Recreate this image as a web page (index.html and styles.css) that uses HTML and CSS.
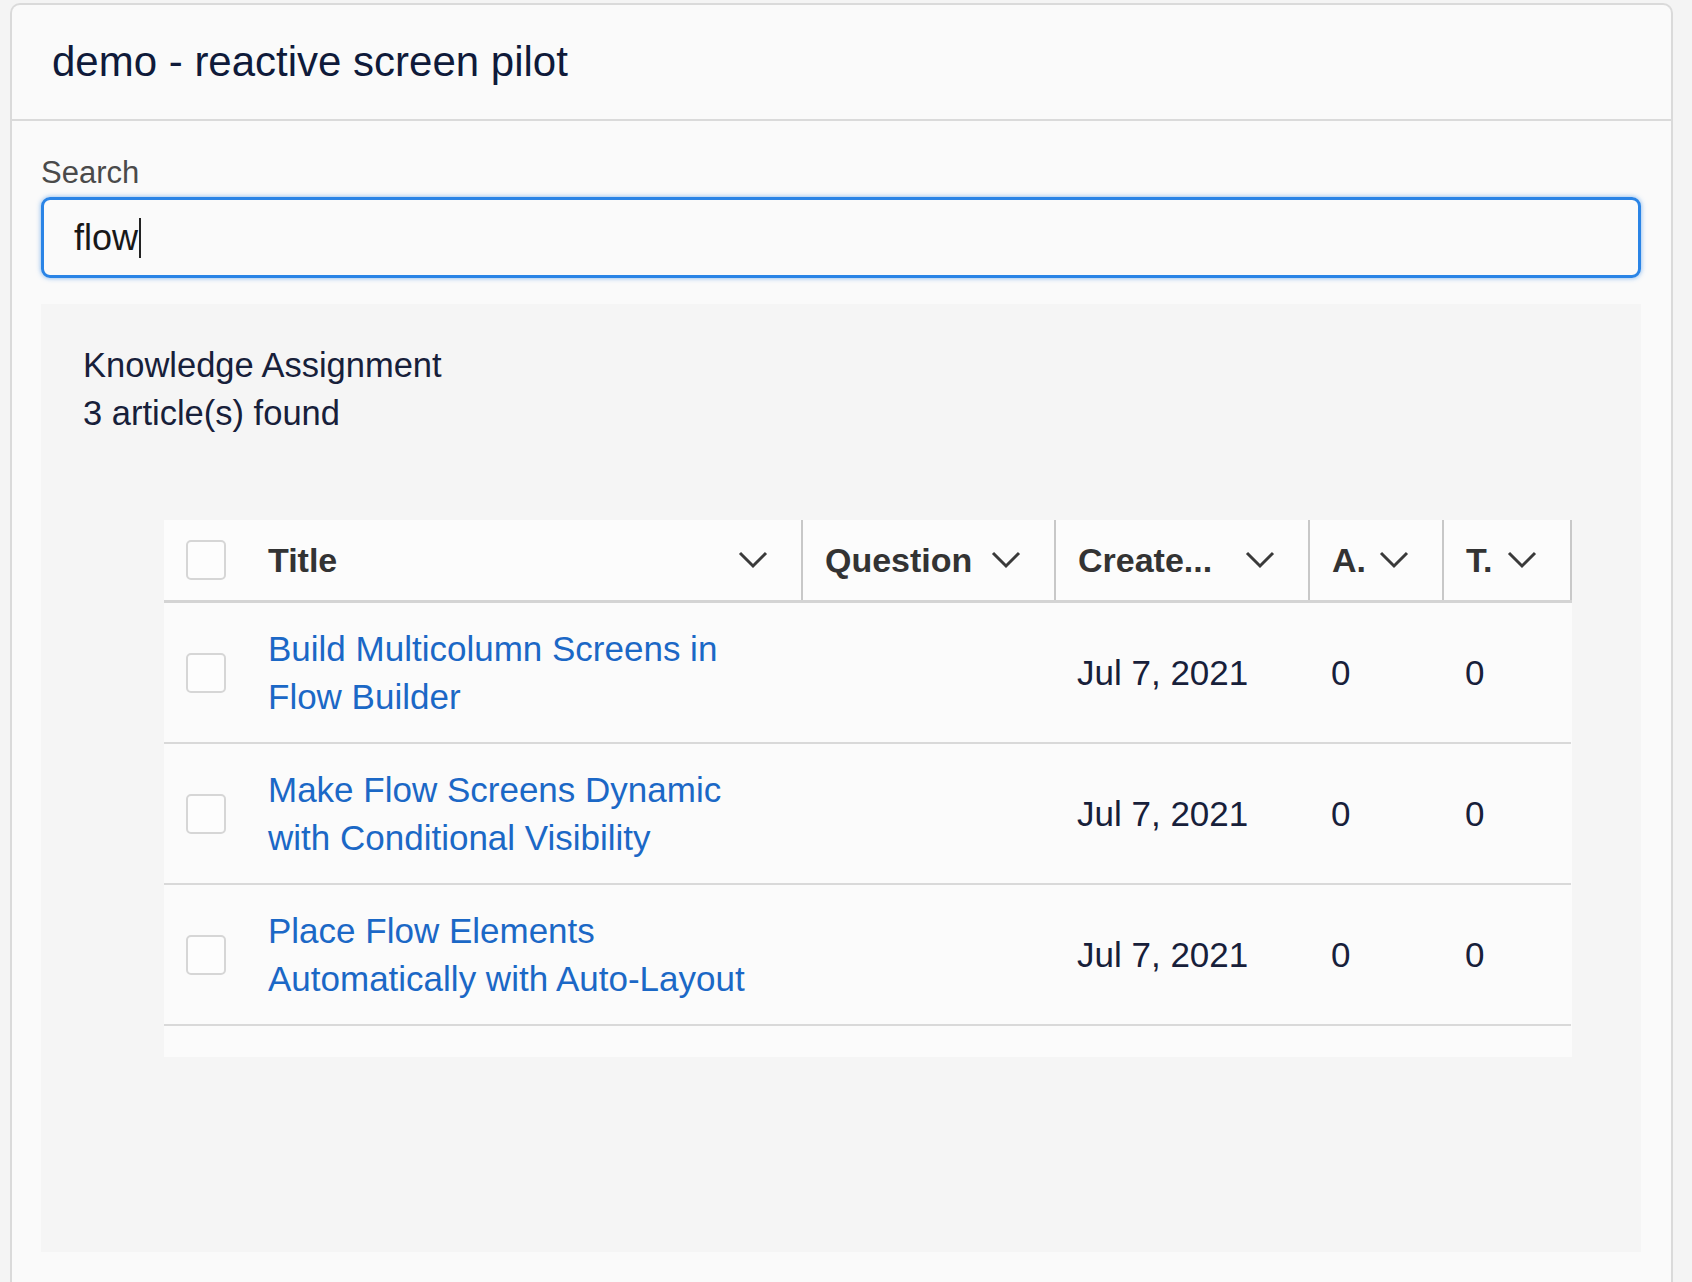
FILE: index.html
```html
<!DOCTYPE html>
<html lang="en">
<head>
    <meta charset="UTF-8">
    <title>demo - reactive screen pilot</title>
    <link rel="stylesheet" href="styles.css">
</head>
<body>

    <div class="card">
        <div class="card-header">
            <h1>demo - reactive screen pilot</h1>
        </div>

        <div class="card-body">
            <label class="field-label" for="search">Search</label>
            <div class="search-input" id="search" role="textbox">flow<span class="caret"></span></div>

            <!-- Resultados -->
            <div class="results">
                <p class="results-title">Knowledge Assignment</p>
                <p class="results-count">3 article(s) found</p>

                <div class="table-wrap">
                    <table class="datatable">
                        <colgroup>
                            <col class="col-check">
                            <col class="col-title">
                            <col class="col-question">
                            <col class="col-created">
                            <col class="col-a">
                            <col class="col-t">
                        </colgroup>
                        <thead>
                            <tr>
                                <th class="check-cell"><span class="checkbox"></span></th>
                                <th><div class="th-inner"><span>Title</span><svg class="chevron" viewBox="0 0 30 18"><path d="M2 2 L15 15 L28 2"/></svg></div></th>
                                <th><div class="th-inner"><span>Question</span><svg class="chevron" viewBox="0 0 30 18"><path d="M2 2 L15 15 L28 2"/></svg></div></th>
                                <th><div class="th-inner"><span>Create...</span><svg class="chevron" viewBox="0 0 30 18"><path d="M2 2 L15 15 L28 2"/></svg></div></th>
                                <th><div class="th-inner"><span>A.</span><svg class="chevron" viewBox="0 0 30 18"><path d="M2 2 L15 15 L28 2"/></svg></div></th>
                                <th><div class="th-inner"><span>T.</span><svg class="chevron" viewBox="0 0 30 18"><path d="M2 2 L15 15 L28 2"/></svg></div></th>
                            </tr>
                        </thead>
                        <tbody>
                            <tr>
                                <td class="check-cell"><span class="checkbox"></span></td>
                                <td><a href="#">Build Multicolumn Screens in Flow Builder</a></td>
                                <td></td>
                                <td>Jul 7, 2021</td>
                                <td>0</td>
                                <td>0</td>
                            </tr>
                            <tr>
                                <td class="check-cell"><span class="checkbox"></span></td>
                                <td><a href="#">Make Flow Screens Dynamic with Conditional Visibility</a></td>
                                <td></td>
                                <td>Jul 7, 2021</td>
                                <td>0</td>
                                <td>0</td>
                            </tr>
                            <tr>
                                <td class="check-cell"><span class="checkbox"></span></td>
                                <td><a href="#">Place Flow Elements Automatically with Auto-Layout</a></td>
                                <td></td>
                                <td>Jul 7, 2021</td>
                                <td>0</td>
                                <td>0</td>
                            </tr>
                        </tbody>
                    </table>
                </div>
            </div>
        </div>
    </div>

</body>
</html>
```

FILE: styles.css
```css
:root {
    --page-bg: #f4f4f4;
    --card-bg: #fafafa;
    --card-border: #dadada;
    --text-color: #17203a;
    --label-color: #4a4a4a;
    --header-color: #333333;
    --link-color: #1b68c6;
    --input-border: #2a84e6;
    --line-color: #d9d9d9;
}

body {
    margin: 0;
    background-color: var(--page-bg);
    font-family: "Liberation Sans", Arial, sans-serif;
    color: var(--text-color);
}

.card {
    margin: 3px 19px 0 10px;
    min-height: 1300px;
    background-color: var(--card-bg);
    border: 2px solid var(--card-border);
    border-bottom: none;
    border-radius: 10px 10px 0 0;
}

.card-header {
    height: 114px;
    display: flex;
    align-items: center;
    padding: 0 40px;
    border-bottom: 2px solid var(--card-border);
}

.card-header h1 {
    margin: 0;
    font-size: 42px;
    font-weight: normal;
    color: #0f1a3a;
}

.card-body {
    padding: 32px 30px 0 29px;
}

.field-label {
    display: block;
    font-size: 31px;
    line-height: 40px;
    color: var(--label-color);
    margin-bottom: 4px;
}

.search-input {
    box-sizing: border-box;
    height: 81px;
    display: flex;
    align-items: center;
    padding-left: 30px;
    border: 3px solid var(--input-border);
    border-radius: 9px;
    box-shadow: 0 0 5px rgba(42, 132, 230, 0.6);
    font-size: 36px;
    color: #181818;
}

.caret {
    display: inline-block;
    width: 2px;
    height: 40px;
    margin-left: 1px;
    background-color: #222;
}

.results {
    box-sizing: border-box;
    height: 948px;
    margin-top: 26px;
    padding: 37px 69px 0 42px;
    background-color: #f5f5f5;
}

.results p {
    margin: 0;
    font-size: 34.5px;
    line-height: 48px;
    color: var(--text-color);
}

.table-wrap {
    margin: 83px 0 0 81px;
    padding-bottom: 31px;
    background-color: #fbfbfb;
}

.datatable {
    width: 100%;
    table-layout: fixed;
    border-collapse: collapse;
}

.col-check { width: 82px; }
.col-title { width: 556px; }
.col-question { width: 253px; }
.col-created { width: 254px; }
.col-a { width: 134px; }
.col-t { width: 128px; }

.datatable th {
    height: 80px;
    padding: 0;
    text-align: left;
    font-size: 34px;
    font-weight: bold;
    color: var(--header-color);
    background-color: #fcfcfc;
    border-bottom: 3px solid #d4d4d4;
    border-right: 2px solid #c8c8c8;
}

.datatable th.check-cell {
    border-right: none;
}

.th-inner {
    display: flex;
    align-items: center;
    justify-content: space-between;
    padding: 0 33px 0 22px;
    white-space: nowrap;
}

.chevron {
    width: 30px;
    height: 18px;
    flex-shrink: 0;
    fill: none;
    stroke: #3a3a3a;
    stroke-width: 3;
}

.datatable td {
    height: 139px;
    padding: 0 22px;
    font-size: 35px;
    line-height: 48px;
    color: var(--text-color);
    border-bottom: 2px solid var(--line-color);
}

.datatable td a {
    color: var(--link-color);
    text-decoration: none;
}

.check-cell {
    padding: 0 0 0 22px !important;
}

.checkbox {
    display: block;
    box-sizing: border-box;
    width: 40px;
    height: 40px;
    border: 2px solid #d6d6d6;
    border-radius: 5px;
    background-color: #fdfdfd;
}
```
